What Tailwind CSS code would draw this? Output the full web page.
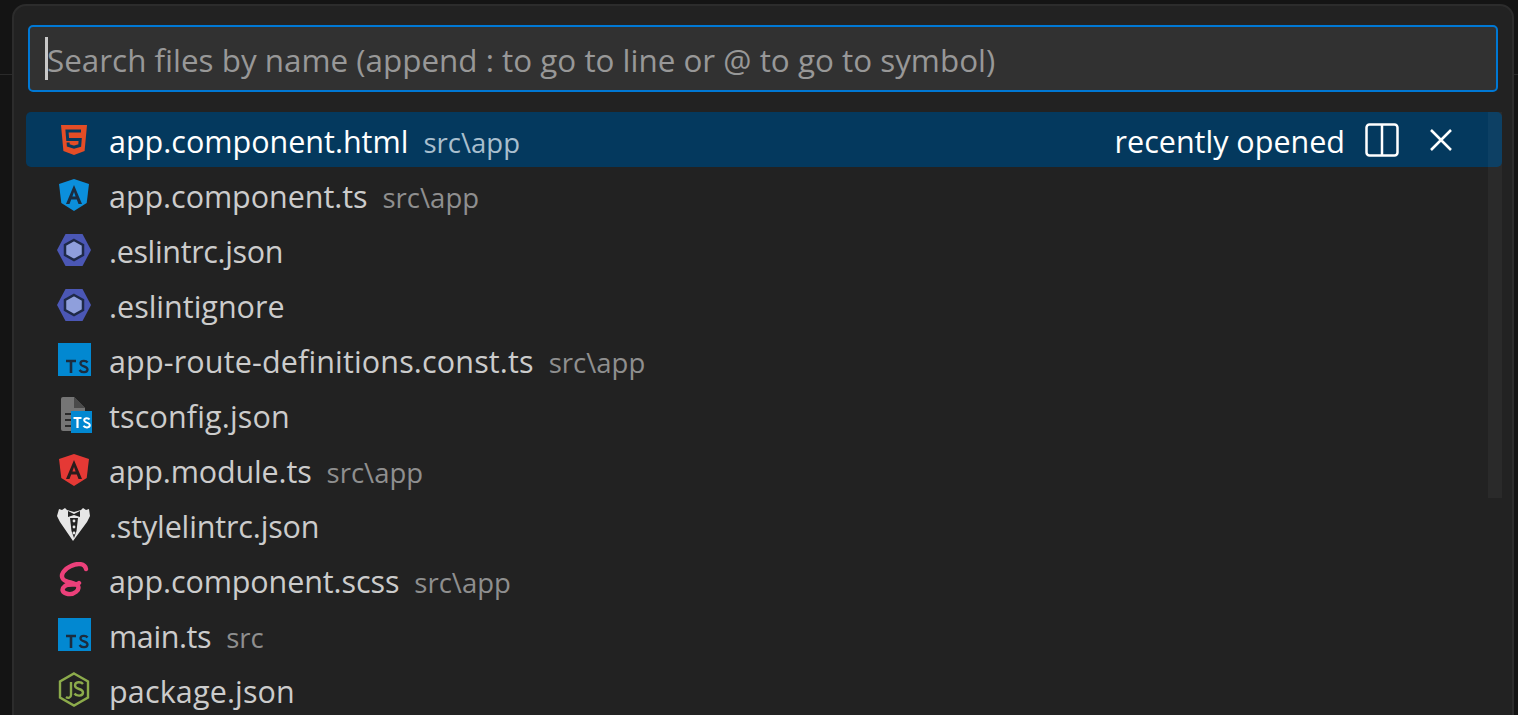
<!DOCTYPE html>
<html lang="en">
<head>
<meta charset="UTF-8">
<title>Quick Open</title>
<script src="https://cdn.jsdelivr.net/npm/@tailwindcss/browser@4"></script>
</head>
<body class="bg-[#141414] overflow-hidden font-['Open_Sans',sans-serif]">
<div class="h-[715px] w-[1518px] overflow-hidden relative">
    <!-- editor behind -->
    <div class="absolute left-0 right-0 top-[74px] h-px bg-[#2a2a2a]"></div>

    <!-- quick open panel -->
    <div class="absolute left-[12px] top-[4px] w-[1502px] h-[720px] bg-[#222222] border-2 border-[#2c2c2c] rounded-t-[14px] px-[14px] pt-[19px]">
        <div class="w-[1470px] h-[67px] bg-[#313131] border-2 border-[#0078d4] rounded-[5px] flex items-center relative pl-[17px]">
            <span class="absolute left-[15px] top-[10px] w-[3px] h-[43px] bg-[#c8c8c8]"></span>
            <span class="text-[31.4px] mt-[2px] text-[#989898] leading-none whitespace-nowrap">Search files by name (append : to go to line or @ to go to symbol)</span>
        </div>

        <div class="mt-[20px] -ml-[2px] w-[1476px]">
            <!-- selected row -->
            <div class="h-[55px] bg-[#04395e] rounded-[5px] flex items-center text-white">
                <div class="w-[36px] ml-[30px] mr-[17px] flex justify-center shrink-0">
                    <svg width="26" height="30" viewBox="0 0 26 30"><path d="M0 0h26l-2.400 26L13 30 2.400 26z" fill="#e44d26"/><path d="M20 6H6l.7 8.500h12.500l-.5 6-5.700 1.800-5.700-1.800-.2-3" fill="none" stroke="#04395e" stroke-width="3"/></svg>
                </div>
                <div class="flex items-baseline mt-[4px] whitespace-nowrap">
                    <span class="text-[30.5px]">app.component.html</span>
                    <span class="text-[27.5px] ml-[15px] text-[#a9bfce]">src\app</span>
                </div>
                <span class="text-[30.5px] mt-[4px] ml-auto whitespace-nowrap">recently opened</span>
                <svg class="ml-[20px]" width="34" height="34" viewBox="0 0 34 34" fill="none" stroke="#ffffff" stroke-width="2.500"><rect x="1.500" y="1.500" width="31" height="31" rx="3"/><path d="M17 1.500v31"/></svg>
                <svg class="ml-[30px] mr-[49px]" width="24" height="24" viewBox="0 0 24 24" fill="none" stroke="#ffffff" stroke-width="2.500"><path d="M2 2l20 20M22 2L2 22"/></svg>
            </div>

            <div class="h-[55px] flex items-center text-[#cccccc]">
                <div class="w-[36px] ml-[30px] mr-[17px] flex justify-center shrink-0">
                    <svg width="30" height="32" viewBox="0 0 30 32"><path d="M15 0L0 5l2.300 19L15 32l12.700-8L30 5z" fill="#0b8fdc"/><path d="M15 6L7 25h3.500l1.700-4.500h5.600l1.700 4.500H23zM13.400 17.500L15 13l1.600 4.500z" fill="#1b2c3f"/></svg>
                </div>
                <div class="flex items-baseline mt-[4px] whitespace-nowrap">
                    <span class="text-[30.5px] tracking-[-0.05px]">app.component.ts</span>
                    <span class="text-[27.5px] ml-[15px] text-[#8f8f8f]">src\app</span>
                </div>
            </div>

            <div class="h-[55px] flex items-center text-[#cccccc]">
                <div class="w-[36px] ml-[30px] mr-[17px] flex justify-center shrink-0">
                    <svg width="36" height="32" viewBox="0 0 36 32"><path d="M9.500 0h17L35 16l-8.500 16h-17L1 16z" fill="#4b57b5"/><path d="M18 6l9 5v10l-9 5-9-5V11z" fill="#8f9fdc" stroke="#1f2a48" stroke-width="2.500"/></svg>
                </div>
                <span class="text-[30.5px] mt-[4px] whitespace-nowrap tracking-[-0.35px]">.eslintrc.json</span>
            </div>

            <div class="h-[55px] flex items-center text-[#cccccc]">
                <div class="w-[36px] ml-[30px] mr-[17px] flex justify-center shrink-0">
                    <svg width="36" height="32" viewBox="0 0 36 32"><path d="M9.500 0h17L35 16l-8.500 16h-17L1 16z" fill="#4b57b5"/><path d="M18 6l9 5v10l-9 5-9-5V11z" fill="#8f9fdc" stroke="#1f2a48" stroke-width="2.500"/></svg>
                </div>
                <span class="text-[30.5px] mt-[4px] whitespace-nowrap">.eslintignore</span>
            </div>

            <div class="h-[55px] flex items-center text-[#cccccc]">
                <div class="w-[36px] ml-[30px] mr-[17px] flex justify-center shrink-0">
                    <svg width="33" height="33" viewBox="0 0 33 33"><rect width="33" height="33" fill="#0288d1"/><path d="M8 18h10M13 18v12" stroke="#1b2c3f" stroke-width="2.600" fill="none"/><path d="M29.500 19.500c-1.500-2.300-6.500-2.300-7 .5-.5 4 7 2.800 7 6.500 0 3.500-6 3.500-8 .5" stroke="#1b2c3f" stroke-width="2.300" fill="none"/></svg>
                </div>
                <div class="flex items-baseline mt-[4px] whitespace-nowrap">
                    <span class="text-[30.5px] tracking-[0.15px]">app-route-definitions.const.ts</span>
                    <span class="text-[27.5px] ml-[15px] text-[#8f8f8f]">src\app</span>
                </div>
            </div>

            <div class="h-[55px] flex items-center text-[#cccccc]">
                <div class="w-[36px] ml-[30px] mr-[17px] flex justify-center shrink-0">
                    <svg class="translate-x-[2px]" width="32" height="36" viewBox="0 0 32 36"><path d="M3 0h11l11 11v23H3a2 2 0 0 1-2-2V2a2 2 0 0 1 2-2z" fill="#757575"/><path d="M14 0l11 11H14z" fill="#4a4a4a"/><path d="M5 16h7v2H5zM5 22h7v2H5zM5 28h7v2H5z" fill="#2a2a2a"/><rect x="11" y="14" width="21" height="22" fill="#0288d1"/><path d="M13.500 21h8M17.500 21v10" stroke="#ffffff" stroke-width="2.200" fill="none"/><path d="M29.500 22.500c-1-1.700-5-1.700-5.300.5-.4 3 5.600 2.300 5.600 5.300 0 2.500-4.800 3-6.300.5" stroke="#ffffff" stroke-width="2" fill="none"/></svg>
                </div>
                <span class="text-[30.5px] mt-[4px] whitespace-nowrap tracking-[0.15px]">tsconfig.json</span>
            </div>

            <div class="h-[55px] flex items-center text-[#cccccc]">
                <div class="w-[36px] ml-[30px] mr-[17px] flex justify-center shrink-0">
                    <svg width="30" height="32" viewBox="0 0 30 32"><path d="M15 0L0 5l2.300 19L15 32l12.700-8L30 5z" fill="#e53935"/><path d="M15 6L7 25h3.500l1.700-4.500h5.600l1.700 4.500H23zM13.400 17.500L15 13l1.600 4.500z" fill="#2b1c1c"/></svg>
                </div>
                <div class="flex items-baseline mt-[4px] whitespace-nowrap">
                    <span class="text-[30.5px] tracking-[-0.15px]">app.module.ts</span>
                    <span class="text-[27.5px] ml-[15px] text-[#8f8f8f]">src\app</span>
                </div>
            </div>

            <div class="h-[55px] flex items-center text-[#cccccc]">
                <div class="w-[36px] ml-[30px] mr-[17px] flex justify-center shrink-0">
                    <svg width="34" height="33" viewBox="0 0 34 33"><path d="M2 1l3 1 3-2 2 2 7 2 7-2 2-2 3 2 3-1 1 7-3 6-14 19L3 14 0 8z" fill="#e6e6e6"/><path d="M11 3l6 3 6-3v6l-6-2-6 2z" fill="#222222"/><path d="M13 10h8l-1.500 13-2.500 7-2.500-7z" fill="#222222"/><circle cx="17" cy="13" r="1.400" fill="#e6e6e6"/><circle cx="17" cy="19" r="1.400" fill="#e6e6e6"/><circle cx="17" cy="25" r="1.400" fill="#e6e6e6"/></svg>
                </div>
                <span class="text-[30.5px] mt-[4px] whitespace-nowrap tracking-[-0.15px]">.stylelintrc.json</span>
            </div>

            <div class="h-[55px] flex items-center text-[#cccccc]">
                <div class="w-[36px] ml-[30px] mr-[17px] flex justify-center shrink-0">
                    <svg width="30" height="35" viewBox="0 0 30 35" fill="none" stroke="#ec407a" stroke-width="4.400" stroke-linecap="round"><path d="M27 7C26 1 18 1 12 4 5 7 1 13 4 17c3 4 12 3 15 7 2 4-4 9-10 8-6-1-7-5-3-8 4-3 11 0 14-3"/></svg>
                </div>
                <div class="flex items-baseline mt-[4px] whitespace-nowrap">
                    <span class="text-[30.5px] tracking-[-0.1px]">app.component.scss</span>
                    <span class="text-[27.5px] ml-[15px] text-[#8f8f8f]">src\app</span>
                </div>
            </div>

            <div class="h-[55px] flex items-center text-[#cccccc]">
                <div class="w-[36px] ml-[30px] mr-[17px] flex justify-center shrink-0">
                    <svg width="33" height="33" viewBox="0 0 33 33"><rect width="33" height="33" fill="#0288d1"/><path d="M8 18h10M13 18v12" stroke="#1b2c3f" stroke-width="2.600" fill="none"/><path d="M29.500 19.500c-1.500-2.300-6.500-2.300-7 .5-.5 4 7 2.800 7 6.500 0 3.500-6 3.500-8 .5" stroke="#1b2c3f" stroke-width="2.300" fill="none"/></svg>
                </div>
                <div class="flex items-baseline mt-[4px] whitespace-nowrap">
                    <span class="text-[30.5px] tracking-[-0.4px]">main.ts</span>
                    <span class="text-[27.5px] ml-[15px] text-[#8f8f8f]">src</span>
                </div>
            </div>

            <div class="h-[55px] flex items-center text-[#cccccc]">
                <div class="w-[36px] ml-[30px] mr-[17px] flex justify-center shrink-0">
                    <svg width="32" height="35" viewBox="0 0 32 35" fill="none" stroke="#8cab4b" stroke-width="2.400"><path d="M16 1.500l14 8v16l-14 8-14-8v-16z"/><path d="M13 10v13c0 3-3 3.500-5 2"/><path d="M25 12c-2-2.500-8-2.500-8 1.500 0 4.500 8 2.500 8 7 0 4-6.500 4-8.500 1"/></svg>
                </div>
                <span class="text-[30.5px] mt-[4px] whitespace-nowrap tracking-[0.15px]">package.json</span>
            </div>
        </div>

        <!-- scrollbar -->
        <div class="absolute left-[1474px] top-[106px] w-[14px] h-[386px] bg-white/[0.04]"></div>
    </div>
</div>
</body>
</html>
